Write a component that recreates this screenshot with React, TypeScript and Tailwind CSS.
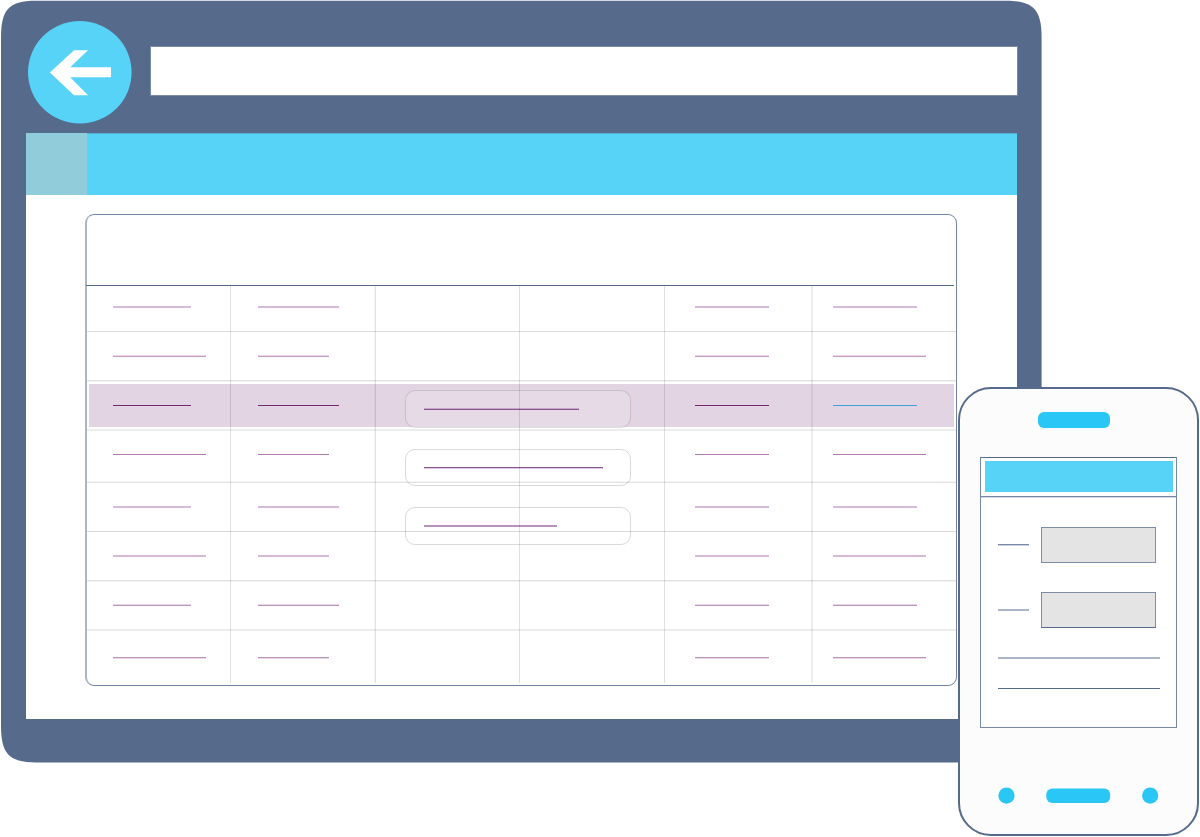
import React from "react";

type Row = { height: string; mark: string; divider: string; active?: boolean };

const both = "h-[2px] bg-[#d6bbd8]";

const rows: Row[] = [
  { height: "h-[46px]", mark: `mt-[20px] ${both}`, divider: "border-b border-black/13" },
  {
    height: "h-[50px]",
    mark: "mt-[23px] h-[2px] border-t border-[#ead9eb] bg-[#c39cc5]",
    divider: "border-b border-black/5 shadow-[inset_0_-1px_rgba(0,0,0,0.11)]",
  },
  { height: "h-[49px]", mark: "mt-[21px] h-px bg-[#722a6d]", divider: "border-b-2 border-black/7", active: true },
  {
    height: "h-[52px]",
    mark: "mt-[23px] h-px bg-[#b07ab0]",
    divider: "border-b border-black/11 shadow-[inset_0_-1px_rgba(0,0,0,0.04)]",
  },
  { height: "h-[49px]", mark: `mt-[23px] ${both}`, divider: "border-b border-black/14" },
  {
    height: "h-[50px]",
    mark: `mt-[23px] ${both}`,
    divider: "border-b border-black/5 shadow-[inset_0_-1px_rgba(0,0,0,0.11)]",
  },
  {
    height: "h-[49px]",
    mark: "mt-[22px] h-[2px] border-t border-[#e8d6e9] bg-[#bb94bc]",
    divider: "border-b-2 border-black/7",
  },
  {
    height: "h-[52px]",
    mark: "mt-[26px] h-[2px] border-b border-[#e8d6e9] bg-[#bb94bc]",
    divider: "",
  },
];

const columns = [
  { cell: "w-[144px] pl-[26px]", odd: "w-[78px]", even: "w-[93px]" },
  { cell: "w-[144px] pl-[27px]", odd: "w-[81px]", even: "w-[71px]" },
  { cell: "w-[145px]" },
  { cell: "w-[144px]" },
  { cell: "w-[147px] pl-[31px]", odd: "w-[74px]", even: "w-[74px]" },
  { cell: "w-[145px] pl-[22px]", odd: "w-[84px]", even: "w-[93px]" },
];

function TableRow({ row, index }: { row: Row; index: number }) {
  return (
    <div className={`flex ${row.height} ${row.divider}`}>
      <div
        className={
          row.active
            ? "mt-[2px] ml-[2px] flex h-[43px] w-[865px] bg-[#e2d4e3]"
            : "flex w-full"
        }
      >
        {columns.map((c, i) => (
          <div key={i} className={`shrink-0 ${c.cell} ${row.active && i === 0 ? "-ml-[2px]" : ""}`}>
            {c.odd && (
              <div
                className={`${index % 2 ? c.even : c.odd} ${
                  row.active && i === 5 ? "mt-[21px] h-px bg-[#3f9fd8]" : row.mark
                }`}
              />
            )}
          </div>
        ))}
      </div>
    </div>
  );
}

function Table() {
  return (
    <div className="relative h-[472px] w-[872px] rounded-[9px] border border-l-2 border-[#7183a1] border-l-[#aab5c8]">
      <div className="-ml-px h-[71px] w-[868px] border-b border-[#566a8b]" />
      <div className="relative h-[397px]">
        {rows.map((row, i) => (
          <TableRow key={i} row={row} index={i} />
        ))}
        <div className="absolute top-[104px] left-[318px] flex flex-col">
          <div className="h-[38px] w-[226px] rounded-[10px] border border-black/13 bg-white/15 pt-[17px] pl-[18px]">
            <div className="h-[2px] w-[155px] border-t border-[#c5a7c8] bg-[#8a5590]" />
          </div>
          <div className="mt-[21px] h-[37px] w-[226px] rounded-[10px] border border-black/15 pt-[17px] pl-[18px]">
            <div className="h-[2px] w-[179px] border-b border-[#dcc5de] bg-[#8a5590]" />
          </div>
          <div className="mt-[21px] h-[38px] w-[226px] rounded-[10px] border border-black/15 pt-[17px] pl-[18px]">
            <div className="h-[2px] w-[133px] bg-[#b992bb]" />
          </div>
        </div>
        <div className="absolute inset-x-0 top-0 flex h-[397px]">
          <div className="w-[144px] border-r border-black/12" />
          <div className="w-[145px] border-r border-black/11 shadow-[inset_-1px_0_rgba(0,0,0,0.04)]" />
          <div className="w-[144px] border-r border-black/12" />
          <div className="w-[145px] border-r border-black/12" />
          <div className="w-[148px] border-r-2 border-black/7" />
        </div>
      </div>
    </div>
  );
}

function Browser() {
  return (
    <div className="ml-px h-[763px] w-[1041px] bg-[#566a8b] pt-px [clip-path:path('M0_38C0_10_7_0.7_35_0.7H1005C1033_0.7_1040.6_10_1040.6_38V725C1040.6_753_1033_762.4_1005_762.4H35C7_762.4_0_753_0_725Z')]">
      <div className="flex h-[132px]">
        <svg className="mt-[20px] ml-[27px] h-[103px] w-[104px]" viewBox="28 21 104 103">
          <ellipse cx="79.8" cy="72.3" rx="51.8" ry="51.2" fill="#57d3f8" />
          <path
            d="M49.9 72.4 74 50.3H88L70.2 67.3H111V77.3H70.2L88 95.2H74Z"
            fill="#fff"
          />
        </svg>
        <div className="mt-[46px] ml-[19px] h-[48px] w-[866px] bg-white ring-1 ring-[#7a89a5]" />
      </div>
      <div className="ml-[25px] h-[586px] w-[991px] bg-white">
        <div className="flex h-[62px] shadow-[inset_0_1px_#57aed0] bg-[#57d3f8]">
          <div className="w-[61px] bg-[#91ccda]" />
        </div>
        <div className="pt-[19px] pl-[59px]">
          <Table />
        </div>
      </div>
    </div>
  );
}

function Phone() {
  return (
    <div className="absolute top-[387px] left-[958px] h-[449px] w-[241px] rounded-[33px] border-2 border-[#566a8b] bg-[#fcfcfc]">
      <div className="mt-[23px] ml-[78px] h-[16px] w-[72px] rounded-[6px] bg-[#2ac6f6]" />
      <div className="mt-[29px] ml-[20px] h-[271px] w-[197px] border border-[#7688a5] border-t-[#566a8b] bg-white">
        <div className="h-[40px] border-b border-[#d3dae4] pt-[3px] pl-[4px] shadow-[inset_0_-1px_#7688a5]">
          <div className="h-[31px] w-[188px] bg-[#57d3f8]" />
        </div>
        <div className="mt-[29px] ml-[17px] flex">
          <div className="mt-[17px] h-[2px] w-[31px] border-b border-[#ccd4e0] bg-[#7688a5]" />
          <div className="ml-[12px] h-[36px] w-[115px] border border-[#7d8da9] bg-[#e4e4e4]" />
        </div>
        <div className="mt-[29px] ml-[17px] flex">
          <div className="mt-[17px] h-[2px] w-[31px] bg-[#aab5c8]" />
          <div className="ml-[12px] h-[36px] w-[115px] border border-[#7d8da9] border-b-[#566a8b] bg-[#e4e4e4]" />
        </div>
        <div className="mt-[29px] ml-[17px] h-[2px] w-[162px] bg-[#aab5c8]" />
        <div className="mt-[29px] ml-[17px] h-px w-[162px] bg-[#566a8b]" />
      </div>
      <svg className="mt-[59px] ml-[38px] h-[18px] w-[162px]" viewBox="998 787 162 18">
        <circle cx="1006.5" cy="795.6" r="8.1" fill="#2ac6f6" />
        <rect x="1046.3" y="788.4" width="63.9" height="14.5" rx="6" fill="#2ac6f6" />
        <circle cx="1150.2" cy="795.6" r="8.1" fill="#2ac6f6" />
      </svg>
    </div>
  );
}

export default function App() {
  return (
    <main className="relative flow-root h-[837px] w-[1200px] overflow-hidden bg-white font-['Liberation_Sans',sans-serif]">
      <Browser />
      <Phone />
    </main>
  );
}
